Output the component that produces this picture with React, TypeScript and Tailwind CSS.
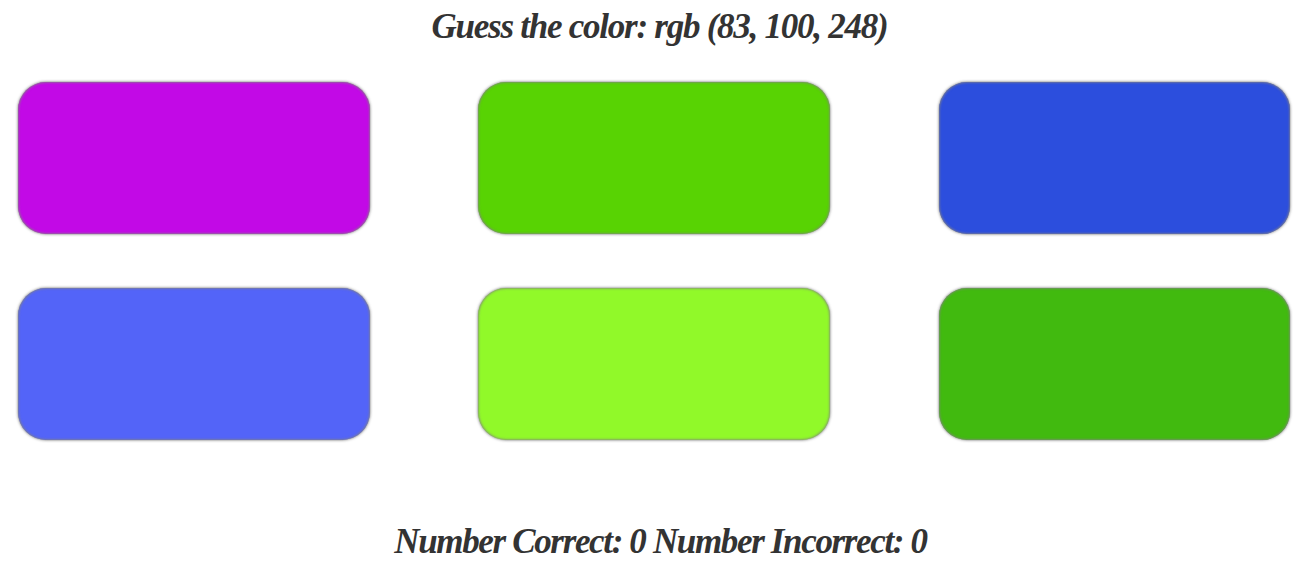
const swatches = ["#c209e6", "#58d303", "#2c4edd", "#5364f8", "#91f929", "#41ba0f"];

const scriptFont = "font-['Liberation_Serif',serif] font-bold italic text-[#333333] text-center text-[35px] leading-[40px]";

export default function App() {
  return (
    <div className="h-[583px] overflow-hidden bg-white">
      <h1 className={`${scriptFont} h-[82px] pt-[7px] pl-[6px] tracking-[-1.25px]`}>
        Guess the color: rgb (83, 100, 248)
      </h1>
      <div className="grid grid-cols-[351.5px_351.5px_351.5px] justify-between gap-y-[54px] pl-[18px] pr-[22.8px]">
        {swatches.map((color) => (
          <div
            key={color}
            className="h-[152px] rounded-[28px] shadow-[0_0_3px_0_rgba(40,40,40,0.75),inset_0_0_2px_1px_rgba(130,130,130,0.7)]"
            style={{ backgroundColor: color }}
          />
        ))}
      </div>
      <p className={`${scriptFont} mt-[82px] pl-[8px] tracking-[-1.35px]`}>
        Number Correct: 0 Number Incorrect: 0
      </p>
    </div>
  );
}
